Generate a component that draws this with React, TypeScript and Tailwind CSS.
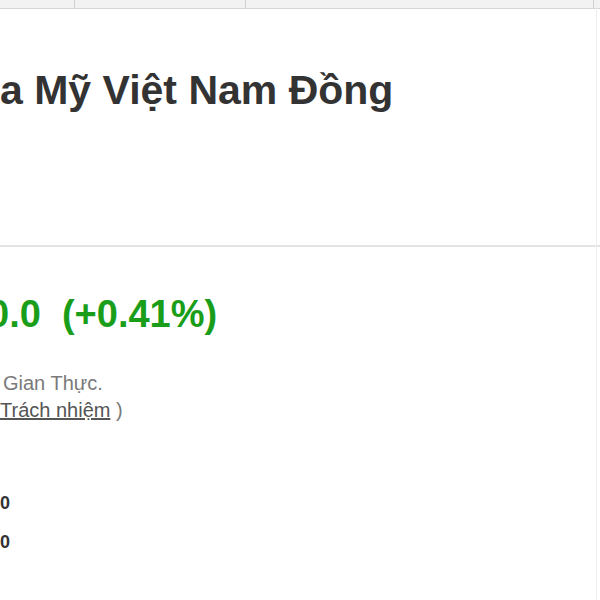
import React from "react";

export default function App() {
  return (
    <div className="w-[600px] h-[600px] bg-white overflow-hidden relative" style={{ fontFamily: '"Liberation Sans", Arial, sans-serif' }}>
      <div className="h-[9px] flex border-b border-[#d4d4d4] bg-[#f2f2f2]">
        <div className="w-[75px] border-r border-[#d0d0d0]" />
        <div className="w-[171px] border-r border-[#d0d0d0]" />
        <div className="w-[348px] border-r border-[#d0d0d0]" />
        <div className="flex-1" />
      </div>
      <div className="h-[238px] border-b-2 border-[#e4e4e4] pt-[57px]">
        <h1 className="text-[41px] font-bold text-[#333333] leading-[48px] whitespace-nowrap">a Mỹ Việt Nam Đồng</h1>
      </div>
      <div className="pt-[45px]">
        <div className="ml-[-12px] text-[38px] font-bold text-[#1a9e1a] leading-[44px] whitespace-nowrap">0.0&nbsp;&nbsp;(+0.41%)</div>
        <div className="mt-[34px] text-[20px] text-[#7a7a7a] leading-[27px] pl-[3px] whitespace-nowrap">Gian Thực.</div>
        <div className="text-[20px] text-[#7a7a7a] leading-[27px] whitespace-nowrap"><span className="underline text-[#555]">Trách nhiệm</span> )</div>
        <div className="mt-[60px] text-[18px] font-bold text-[#333] leading-[39px]">0</div>
        <div className="text-[18px] font-bold text-[#333] leading-[39px]">0</div>
      </div>
      <div className="absolute top-0 right-[3px] w-px h-full bg-[#eeeeee]" />
    </div>
  );
}
